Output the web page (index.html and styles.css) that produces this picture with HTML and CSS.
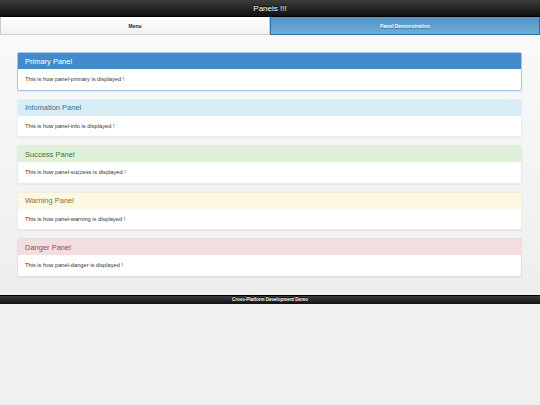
FILE: index.html
```html
<!DOCTYPE html>
<html lang="en">
<head>
	<meta charset="UTF-8">
	<meta name="viewport" content="width=device-width, initial-scale=1">
	<title>Panels !!!</title>
	<link rel="stylesheet" href="styles.css">
</head>
<body>

	<div class="header">
		<h1>Panels !!!</h1>
	</div>

	<div class="navbar">
		<a class="navbtn">Menu</a>
		<a class="navbtn active">Panel Demonstration</a>
	</div>

	<div class="content">
		<div class="panel primary">
			<div class="panel-heading">Primary Panel</div>
			<div class="panel-body">This is how panel-primary is displayed !</div>
		</div>

		<div class="panel info">
			<div class="panel-heading">Infomation Panel</div>
			<div class="panel-body">This is how panel-info is displayed !</div>
		</div>

		<div class="panel success">
			<div class="panel-heading">Success Panel</div>
			<div class="panel-body">This is how panel-success is displayed !</div>
		</div>

		<div class="panel warning">
			<div class="panel-heading">Warning Panel</div>
			<div class="panel-body">This is how panel-warning is displayed !</div>
		</div>

		<div class="panel danger">
			<div class="panel-heading">Danger Panel</div>
			<div class="panel-body">This is how panel-danger is displayed !</div>
		</div>
	</div>

	<div class="footer">
		<h4>Cross-Platform Development Demo</h4>
	</div>

</body>
</html>
```

FILE: styles.css
```css
html {
	background: #f0f0f0;
}

body {
	margin: 0;
	font-family: "Liberation Sans", Arial, sans-serif;
	color: #333;
	background: #f0f0f0;
}

.header {
	height: 17px;
	background: linear-gradient(#3c3c3c, #111);
	border-bottom: 1px solid #000;
	box-sizing: border-box;
	display: flex;
	align-items: center;
	justify-content: center;
}

.header h1 {
	margin: 0;
	font-size: 8px;
	font-weight: normal;
	color: #fff;
	text-shadow: 0 -1px 0 #000;
}

.navbar {
	display: flex;
	height: 18px;
}

.navbtn {
	flex: 1;
	display: flex;
	align-items: center;
	justify-content: center;
	font-size: 5px;
	font-weight: bold;
	color: #222;
	background: linear-gradient(#fff, #f1f1f1);
	border: 1px solid #ccc;
	border-top: 0;
	text-shadow: 0 1px 0 #fff;
}

.navbtn.active {
	color: #fff;
	background: linear-gradient(#5393c5, #6facd5);
	border-color: #2a6fa6;
	text-shadow: 0 1px 0 #3373a5;
}

.content {
	padding: 17px 18px 10px 17px;
	background: linear-gradient(#f9f9f9, #eee);
}

.panel {
	margin-bottom: 8px;
	background: #fff;
	border: 1px solid #ddd;
	border-radius: 2px;
	box-shadow: 0 1px 1px rgba(0, 0, 0, 0.05);
	overflow: hidden;
}

.panel-heading {
	height: 16px;
	padding: 0 7px;
	display: flex;
	align-items: center;
	font-size: 7.5px;
}

.panel-body {
	height: 20.5px;
	padding: 0 7px;
	display: flex;
	align-items: center;
	font-size: 5.7px;
	color: #333;
}

.primary {
	border-color: #a9c3e0;
}

.primary .panel-heading {
	color: #fff;
	background: #428bca;
}

.info {
	border-color: #e3eef5;
}

.info .panel-heading {
	color: #31708f;
	background: #d9edf7;
}

.success {
	border-color: #e4ede0;
}

.success .panel-heading {
	color: #3c763d;
	background: #dff0d8;
}

.warning {
	border-color: #f3efe0;
}

.warning .panel-heading {
	color: #8a6d3b;
	background: #fcf8e3;
}

.danger {
	border-color: #eddcdc;
}

.danger .panel-heading {
	color: #a94442;
	background: #f2dede;
}

.footer {
	height: 9px;
	background: linear-gradient(#3c3c3c, #111);
	border-top: 1px solid #000;
	box-sizing: border-box;
	display: flex;
	align-items: center;
	justify-content: center;
}

.footer h4 {
	margin: 0;
	font-size: 4.5px;
	font-weight: bold;
	color: #fff;
	text-shadow: 0 -1px 0 #000;
}
```
